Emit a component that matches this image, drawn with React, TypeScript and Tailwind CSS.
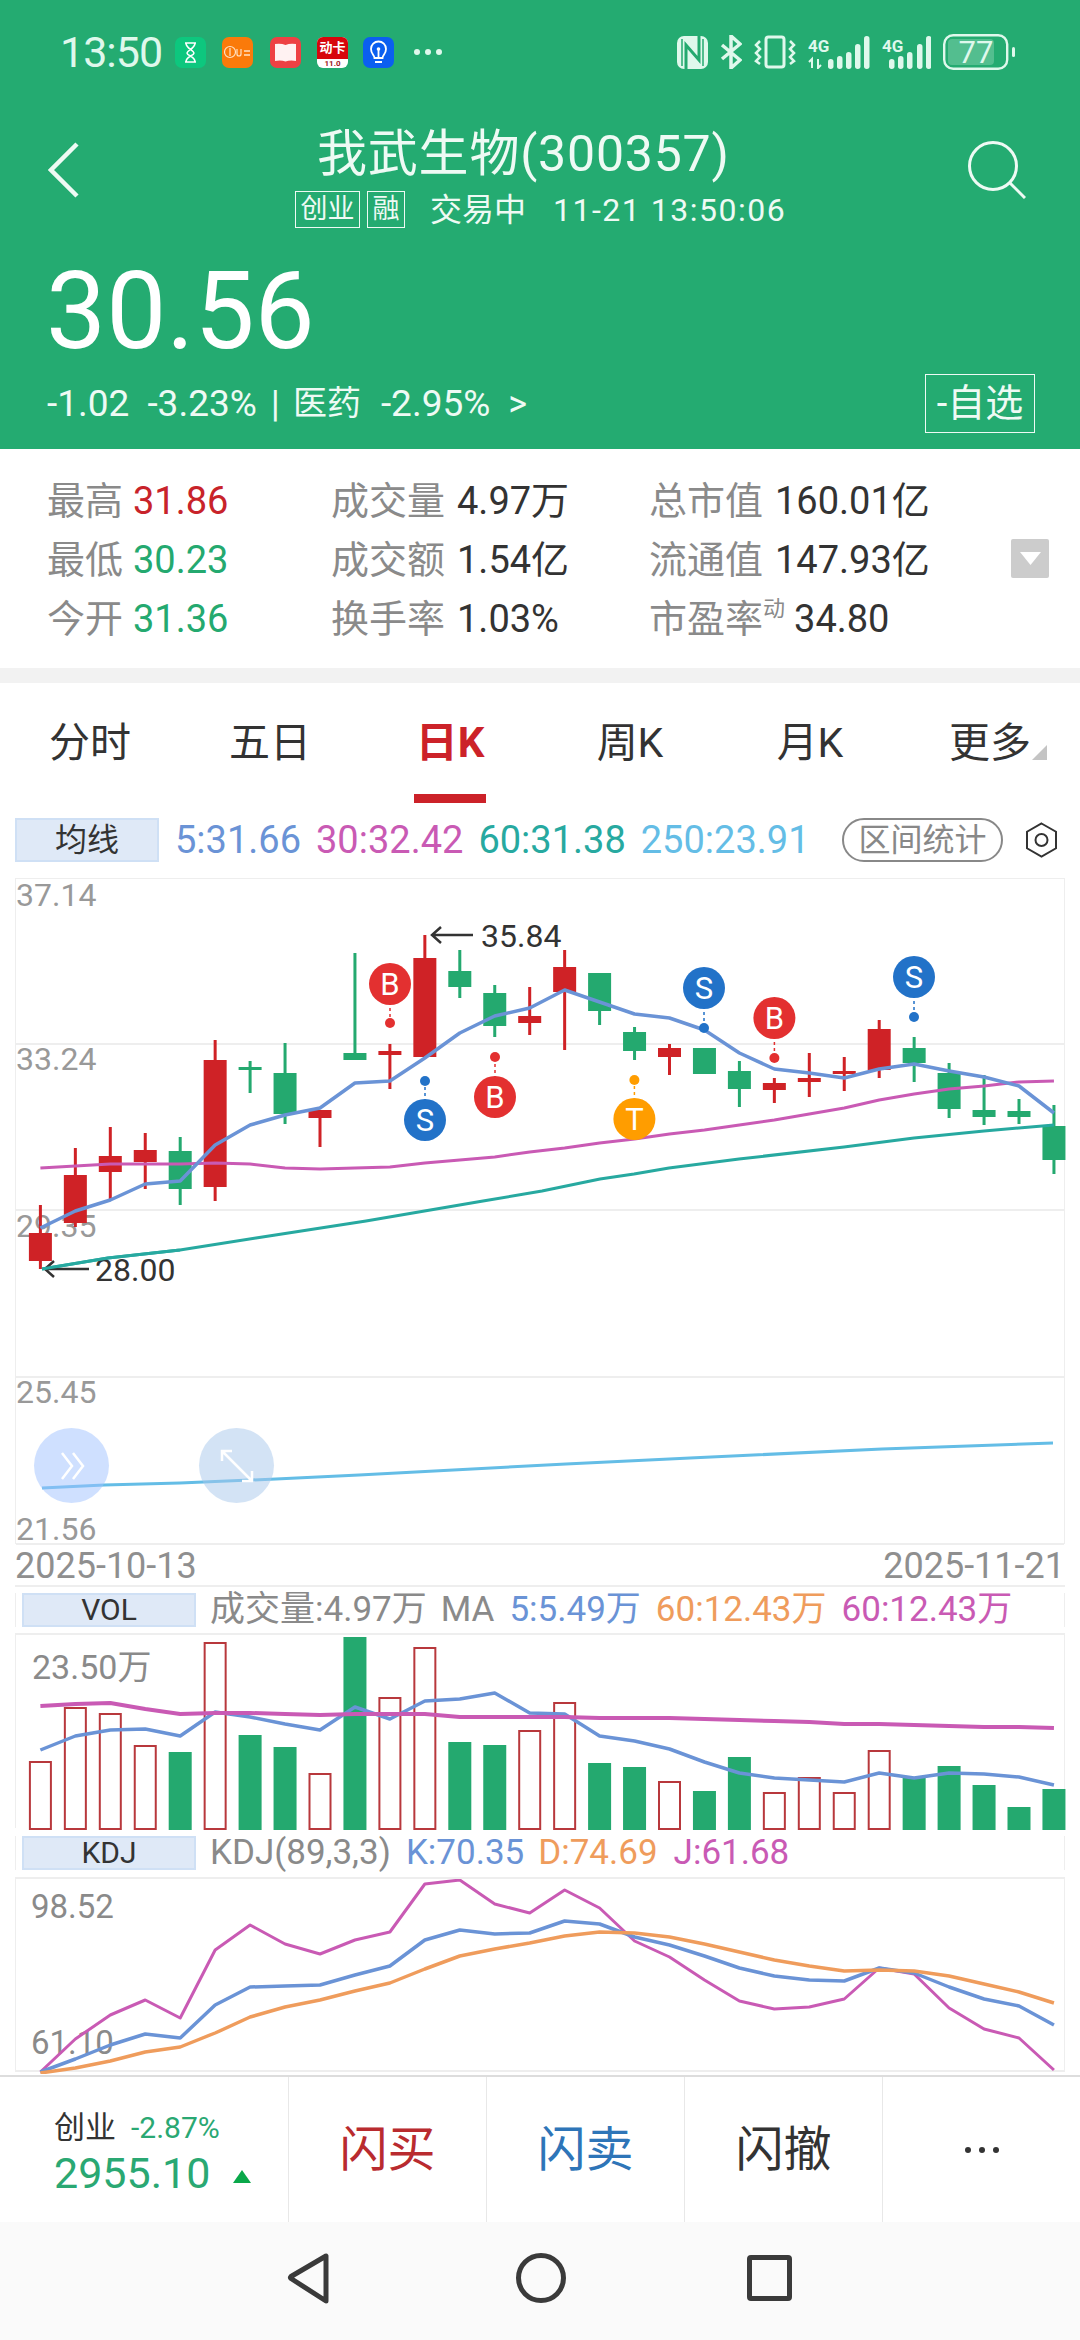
import React from 'react';

const RED = '#cf2226';
const GREEN = '#24a96f';
const STATUS = '#dff8ec';

// candle centres share one x scale across the three chart panels
const cx = (i: number) => 39.4 + 34.95 * i;

// [wickTop, wickBottom, bodyTop, bodyBottom, isRed]
const candles: [number, number, number, number, boolean][] = [
  [1204, 1268, 1232, 1260, true],
  [1147, 1226, 1174, 1222, true],
  [1126, 1200, 1155, 1171, true],
  [1132, 1188, 1149, 1161, true],
  [1136, 1204, 1150, 1188, false],
  [1039, 1200, 1059, 1186, true],
  [1060, 1092, 1066, 1069, false],
  [1042, 1123, 1072, 1113, false],
  [1109, 1146, 1109, 1117, true],
  [952, 1059, 1052, 1059, false],
  [1043, 1088, 1050, 1054, true],
  [934, 1056, 957, 1056, true],
  [949, 997, 970, 986, false],
  [984, 1036, 992, 1025, false],
  [986, 1034, 1015, 1022, true],
  [949, 1049, 966, 991, true],
  [972, 1024, 972, 1010, false],
  [1026, 1059, 1031, 1050, false],
  [1043, 1074, 1047, 1056, true],
  [1047, 1073, 1047, 1073, false],
  [1060, 1106, 1070, 1088, false],
  [1077, 1102, 1082, 1089, true],
  [1052, 1096, 1077, 1081, true],
  [1056, 1090, 1070, 1073, true],
  [1019, 1077, 1028, 1069, true],
  [1036, 1081, 1047, 1062, false],
  [1062, 1117, 1072, 1108, false],
  [1074, 1124, 1109, 1116, false],
  [1098, 1123, 1110, 1116, false],
  [1104, 1173, 1125, 1159, false],
];

const ma5 = [1227, 1210, 1199, 1183, 1180, 1144, 1124, 1114, 1107, 1082, 1080, 1057, 1032, 1015, 1007, 989, 1001, 1013, 1017, 1029, 1052, 1068, 1072, 1077, 1068, 1063, 1070, 1076, 1085, 1112];
const ma30 = [1167, 1165, 1163, 1163, 1163, 1162, 1163, 1167, 1168, 1167, 1166, 1162, 1159, 1156, 1151, 1147, 1142, 1138, 1133, 1129, 1124, 1119, 1113, 1107, 1099, 1093, 1088, 1085, 1081, 1080];
const ma60 = '41,1268 107,1257 179,1249 255,1237 365,1220 482,1200 541,1190 599,1178 633,1173 668,1167 738,1158 843,1146 913,1137 983,1130 1053,1124';
const ma250 = '41,1487 103,1484 179,1482 275,1478 358,1474 565,1463 689,1457 881,1448 1052,1442';

const volTops = [1759, 1705, 1711, 1743, 1750, 1640, 1733, 1745, 1771, 1635, 1695, 1645, 1740, 1743, 1728, 1700, 1761, 1765, 1779, 1789, 1755, 1790, 1775, 1790, 1748, 1776, 1764, 1783, 1805, 1787];
const volMa5 = [1748, 1734, 1728, 1727, 1734, 1710, 1715, 1722, 1728, 1705, 1717, 1699, 1697, 1691, 1711, 1712, 1734, 1739, 1747, 1760, 1771, 1776, 1778, 1780, 1771, 1776, 1771, 1772, 1775, 1783];
const volMa60 = [1704, 1702, 1701, 1707, 1712, 1711, 1711, 1712, 1713, 1712, 1712, 1712, 1715, 1715, 1715, 1715, 1716, 1716, 1716, 1717, 1718, 1719, 1720, 1722, 1722, 1723, 1724, 1725, 1725, 1726];

const kdjJ = [2070, 2037, 2013, 1998, 2016, 1948, 1923, 1942, 1952, 1938, 1930, 1882, 1878, 1902, 1911, 1888, 1906, 1939, 1955, 1978, 1999, 2007, 2005, 1997, 1966, 1972, 2006, 2027, 2036, 2068];
const kdjK = [2070, 2057, 2043, 2032, 2036, 2003, 1985, 1984, 1983, 1973, 1964, 1938, 1928, 1932, 1931, 1919, 1922, 1935, 1943, 1954, 1966, 1974, 1978, 1979, 1966, 1971, 1985, 1997, 2004, 2023];
const kdjD = [2071, 2066, 2059, 2050, 2045, 2031, 2015, 2005, 1998, 1989, 1981, 1967, 1954, 1947, 1941, 1934, 1930, 1931, 1935, 1942, 1950, 1958, 1964, 1969, 1968, 1969, 1974, 1982, 1990, 2001];

// letter, x, circle y, dot y, colour
const signals: [string, number, number, number, string][] = [
  ['B', 389, 983, 1022, '#e33030'],
  ['S', 424, 1119, 1080, '#2272c8'],
  ['B', 494, 1096, 1056, '#e33030'],
  ['T', 633.4, 1118, 1079, '#ff9d00'],
  ['S', 703, 987, 1027, '#2272c8'],
  ['B', 773.4, 1017, 1057, '#e33030'],
  ['S', 913, 976, 1016, '#2272c8'],
];

const toPoints = (ys: number[]) => ys.map((y, i) => `${cx(i)},${y}`).join(' ');

function Line({ points, color, width = 3.5 }: { points: string; color: string; width?: number }) {
  return <polyline points={points} fill="none" stroke={color} strokeWidth={width} strokeLinejoin="round" />;
}

function StatusBar() {
  return (
    <div className="flex h-[36px] items-center text-[#dff8ec]">
      <span className="ml-[60px] w-[102px] text-[43px] leading-[36px] tracking-[-1px]">13:50</span>
      <svg className="ml-[13px]" width="31" height="31" viewBox="0 0 31 31">
        <rect width="31" height="31" rx="7" fill="#0dc77e" />
        <path d="M10 6h11M10 25h11M11 6c0 6 8 7 8 10s-8 3-8 9M20 6c0 6-8 7-8 10s8 3 8 9" stroke="#fff" strokeWidth="1.6" fill="none" />
      </svg>
      <svg className="ml-[16px]" width="31" height="31" viewBox="0 0 31 31">
        <rect width="31" height="31" rx="7" fill="#fa7a0a" />
        <circle cx="8" cy="15" r="5.5" fill="none" stroke="#ffe2c4" strokeWidth="1.2" />
        <path d="M8 11v8M15 12v5a2 2 0 0 0 4 0v-5" stroke="#ffe2c4" strokeWidth="1.2" fill="none" />
        <path d="M22 14h6M22 18h6" stroke="#ffe2c4" strokeWidth="1.5" />
      </svg>
      <svg className="ml-[17px]" width="31" height="31" viewBox="0 0 31 31">
        <rect width="31" height="31" rx="7" fill="#ee4144" />
        <path d="M5 7q6-1 10.500 1q4.500-2 10.500-1v17q-6-1-10.500 0.500q-4.500-1.500-10.500-0.500z" fill="#fff2f2" />
      </svg>
      <div className="ml-[16px] flex h-[31px] w-[31px] flex-col overflow-hidden rounded-[6px] bg-white">
        <span className="h-[22px] bg-[#d7060c] text-center text-[13px] leading-[22px] font-bold text-white">动卡</span>
        <span className="text-center text-[8px] leading-[9px] font-bold text-[#a02020]">11.0</span>
      </div>
      <svg className="ml-[15px]" width="31" height="31" viewBox="0 0 31 31">
        <rect width="31" height="31" rx="7" fill="#0b5ff0" />
        <path d="M11.500 21c0-3-3.500-4-3.500-9a7.500 7.500 0 0 1 15 0c0 5-3.500 6-3.500 9zM12 25h7M15.500 21v-9" stroke="#fff" strokeWidth="1.800" fill="none" />
        <circle cx="15.500" cy="12" r="1.800" fill="#fff" />
      </svg>
      <div className="ml-[20px] flex gap-[5px]">
        <span className="h-[6px] w-[6px] rounded-full bg-[#dff8ec]" />
        <span className="h-[6px] w-[6px] rounded-full bg-[#dff8ec]" />
        <span className="h-[6px] w-[6px] rounded-full bg-[#dff8ec]" />
      </div>
      <div className="mr-[65px] ml-auto flex items-center gap-[12px]">
        <svg width="31" height="33" viewBox="0 0 31 33">
          <rect x="0" y="0" width="31" height="33" rx="7" fill={STATUS} />
          <path d="M9 33V9l13 15V0" stroke={GREEN} strokeWidth="3" fill="none" />
          <path d="M5 3v27M26 3v27" stroke={GREEN} strokeWidth="1.500" fill="none" />
        </svg>
        <svg width="22" height="34" viewBox="0 0 22 34">
          <path d="M2 10l18 15-9 8V1l9 8L2 24" stroke={STATUS} strokeWidth="3.500" fill="none" />
        </svg>
        <svg width="42" height="34" viewBox="0 0 42 34">
          <rect x="12" y="2" width="18" height="30" rx="2.500" stroke={STATUS} strokeWidth="3" fill="none" />
          <path d="M6 6L2 10l4 4-4 4 4 4-4 4 4 3M36 6l4 4-4 4 4 4-4 4 4 4-4 3" stroke={STATUS} strokeWidth="2.500" fill="none" />
        </svg>
        <svg width="62" height="34" viewBox="0 0 62 34" fontFamily="Roboto, sans-serif">
          <text x="0" y="17" fontSize="17" fontWeight="700" fill={STATUS}>4G</text>
          <path d="M4 33v-9l-3 3M10 24v9l3-3" stroke={STATUS} strokeWidth="2" fill="none" />
          <rect x="20" y="24" width="5.500" height="10" rx="2.700" fill={STATUS} />
          <rect x="29" y="21" width="5.500" height="13" rx="2.700" fill={STATUS} />
          <rect x="38" y="17" width="5.500" height="17" rx="2.700" fill={STATUS} />
          <rect x="47" y="9" width="5.500" height="25" rx="2.700" fill={STATUS} />
          <rect x="56" y="1" width="5.500" height="33" rx="2.700" fill={STATUS} />
        </svg>
        <svg width="49" height="34" viewBox="0 0 49 34" fontFamily="Roboto, sans-serif">
          <text x="0" y="17" fontSize="17" fontWeight="700" fill={STATUS}>4G</text>
          <rect x="7" y="24" width="5.500" height="10" rx="2.700" fill={STATUS} />
          <rect x="16" y="21" width="5.500" height="13" rx="2.700" fill={STATUS} />
          <rect x="25" y="17" width="5.500" height="17" rx="2.700" fill={STATUS} />
          <rect x="35" y="9" width="5.500" height="25" rx="2.700" fill={STATUS} />
          <rect x="44" y="1" width="5.500" height="33" rx="2.700" fill={STATUS} />
        </svg>
        <svg width="72" height="36" viewBox="0 0 72 36" fontFamily="Roboto, sans-serif">
          <rect x="5" y="5" width="46" height="26" rx="4" fill={STATUS} opacity="0.25" />
          <rect x="1.200" y="1.200" width="63" height="33.500" rx="9" fill="none" stroke={STATUS} strokeWidth="2.400" />
          <text x="33" y="29" fontSize="31" textAnchor="middle" fill={STATUS}>77</text>
          <rect x="69" y="13" width="3" height="10" rx="1.500" fill={STATUS} />
        </svg>
      </div>
    </div>
  );
}

function Header() {
  return (
    <div className="h-[449px] bg-[#24ab71] pt-[34px] text-[#eefaf4]">
      <StatusBar />
      <div className="mt-[60px] flex items-center">
        <svg className="mt-[-18px] ml-[48px]" width="31" height="56" viewBox="0 0 31 56">
          <path d="M29 2L3 28l26 26" stroke="#eefaf4" strokeWidth="4.500" fill="none" />
        </svg>
        <div className="ml-[216px]">
          <div className="ml-[22px] h-[48px] text-[50px] leading-[48px] tracking-[0.8px]">我武生物(300357)</div>
          <div className="mt-[13px] flex h-[37px] items-center">
            <span className="h-[37px] w-[65px] border border-[#eefaf4] text-center text-[27px] leading-[35px]">创业</span>
            <span className="ml-[7px] h-[37px] w-[38px] border border-[#eefaf4] text-center text-[27px] leading-[35px]">融</span>
            <span className="ml-[25px] text-[32px]">交易中</span>
            <span className="ml-[27px] text-[32px] tracking-[1.5px]">11-21 13:50:06</span>
          </div>
        </div>
        <svg className="mt-[-18px] mr-[54px] ml-auto" width="58" height="58" viewBox="0 0 58 58">
          <circle cx="25" cy="25" r="23.500" stroke="#eefaf4" strokeWidth="3" fill="none" />
          <path d="M41 41l16 16" stroke="#eefaf4" strokeWidth="3" fill="none" />
        </svg>
      </div>
      <div className="mt-[30px] pl-[46px] text-[107px] leading-[108px] text-white">30.56</div>
      <div className="mt-[8px] flex h-[59px] items-center pl-[47px] text-[37px]">
        <span>-1.02</span>
        <span className="ml-[18px]">-3.23%</span>
        <span className="ml-[14px]">|</span>
        <span className="ml-[13px] text-[34px]">医药</span>
        <span className="ml-[20px]">-2.95%</span>
        <span className="ml-[18px] text-[36px]">&gt;</span>
        <span className="mr-[45px] ml-auto h-[59px] w-[110px] border border-[#eefaf4] text-center text-[38px] leading-[57px]">-自选</span>
      </div>
    </div>
  );
}

function Stat({ label, value, color, sup }: { label: string; value: string; color: string; sup?: string }) {
  return (
    <div className="flex h-[59px] items-center text-[38px]">
      <span className="text-[#8a8a8a]">{label}</span>
      {sup && <span className="mt-[-22px] text-[22px] text-[#8a8a8a]">{sup}</span>}
      <span className={sup ? 'ml-[9px]' : label.length === 2 ? 'ml-[10px]' : 'ml-[12px]'} style={{ color }}>{value}</span>
    </div>
  );
}

function Stats() {
  return (
    <div className="flex h-[219px] items-center">
      <div className="mt-[3px] grid flex-1 grid-cols-[284px_318px_1fr] pl-[47px]">
        <Stat label="最高" value="31.86" color="#c8232a" />
        <Stat label="成交量" value="4.97万" color="#333" />
        <Stat label="总市值" value="160.01亿" color="#333" />
        <Stat label="最低" value="30.23" color={GREEN} />
        <Stat label="成交额" value="1.54亿" color="#333" />
        <Stat label="流通值" value="147.93亿" color="#333" />
        <Stat label="今开" value="31.36" color={GREEN} />
        <Stat label="换手率" value="1.03%" color="#333" />
        <Stat label="市盈率" value="34.80" color="#333" sup="动" />
      </div>
      <div className="mr-[31px] flex h-[39px] w-[38px] items-center justify-center rounded-[2px] bg-[#cccccc]">
        <svg width="21" height="13" viewBox="0 0 21 13"><path d="M0 0h21L10.500 13z" fill="#fff" /></svg>
      </div>
    </div>
  );
}

function Tabs() {
  const tabs = ['分时', '五日', '日K', '周K', '月K', '更多'];
  return (
    <div className="grid h-[120px] grid-cols-6">
      {tabs.map(tab => (
        <div key={tab} className="flex flex-col items-center pt-[39px]">
          <div className={tab === '日K' ? 'relative h-[42px] text-[42px] leading-[42px] font-bold text-[#cc2229]' : 'relative h-[42px] text-[41px] leading-[42px] text-[#333]'}>
            {tab}
            {tab === '更多' && (
              <svg className="absolute top-[23px] left-[83px]" width="15" height="15" viewBox="0 0 15 15"><path d="M15 0v15H0z" fill="#c4c4c4" /></svg>
            )}
          </div>
          {tab === '日K' && <div className="mt-[30px] h-[9px] w-[72px] bg-[#cc2229]" />}
        </div>
      ))}
    </div>
  );
}

function MaRow() {
  return (
    <div className="mt-[15px] flex h-[44px] items-center text-[38px]">
      <div className="ml-[15px] h-[44px] w-[144px] border-2 border-[#cfe0f5] bg-[#dfe9f7] text-center text-[32px] leading-[40px] text-[#333]">均线</div>
      <div className="ml-[16px] flex gap-[15px]">
        <span className="text-[#6a93d6]">5:31.66</span>
        <span className="text-[#c95ab4]">30:32.42</span>
        <span className="text-[#27a9a0]">60:31.38</span>
        <span className="text-[#64bde6]">250:23.91</span>
      </div>
      <div className="ml-auto h-[44px] w-[161px] rounded-full border-2 border-[#888] text-center text-[32px] leading-[40px] text-[#888]">区间统计</div>
      <svg className="mr-[22px] ml-[22px]" width="33" height="36" viewBox="0 0 33 36">
        <path d="M16.500 1.500l14.500 8.250v16.500L16.500 34.500 2 26.250V9.750z" fill="none" stroke="#333" strokeWidth="2" />
        <circle cx="16.500" cy="18" r="6" fill="none" stroke="#333" strokeWidth="2" />
      </svg>
    </div>
  );
}

function PriceChart() {
  return (
    <div className="relative mx-[15px] h-[666px] border-x border-t border-[#eeeeee] text-[32px] text-[#999999]">
      <div className="h-[166px] border-b-2 border-[#eeeeee] leading-[32px]">37.14</div>
      <div className="h-[166px] border-b-2 border-[#eeeeee] leading-[28px]">33.24</div>
      <div className="h-[167px] border-b-2 border-[#eeeeee] leading-[30px]">29.35</div>
      <div className="flex h-[167px] flex-col justify-between border-b-2 border-[#eeeeee] leading-[28px]">
        <span>25.45</span>
        <span>21.56</span>
      </div>

      <svg className="absolute top-0 left-0" width="1050" height="666" viewBox="15 878 1050 666" fontFamily="Roboto, sans-serif">
        {candles.map(([wt, wb, bt, bb, isRed], i) => (
          <g key={i} fill={isRed ? RED : GREEN}>
            <rect x={cx(i) - 1.500} y={wt} width="3" height={wb - wt} />
            <rect x={cx(i) - 11.500} y={bt} width="23" height={Math.max(bb - bt, 3)} />
          </g>
        ))}
        <Line points={toPoints(ma30)} color="#c95ab4" width={3} />
        <Line points={ma60} color="#27a9a0" width={3} />
        <Line points={ma250} color="#64bde6" width={3} />
        <Line points={toPoints(ma5)} color="#6a93d6" />

        {signals.map(([letter, x, y, dot, color]) => (
          <g key={`${letter}${x}`} fill={color}>
            <line x1={x} x2={x} y1={y} y2={dot} stroke={color} strokeWidth="1.500" strokeDasharray="3 3" />
            <circle cx={x} cy={dot} r="5" />
            <circle cx={x} cy={y} r="21" />
            <text x={x} y={y + 11} fontSize="31" textAnchor="middle" fill="#fff">{letter}</text>
          </g>
        ))}

        <path d="M472 934h-41m9-8l-9 8 9 8" stroke="#333" strokeWidth="2.500" fill="none" />
        <text x="480" y="946" fontSize="32" fill="#333">35.84</text>
        <path d="M88 1268H44m9-8l-9 8 9 8" stroke="#333" strokeWidth="2.500" fill="none" />
        <text x="94" y="1280" fontSize="32" fill="#333">28.00</text>
        <Line points="41,1268 107,1257 179,1249" color="#27a9a0" width={3} />
      </svg>

      <div className="absolute top-[549px] left-[18px] flex h-[75px] w-[75px] items-center justify-center rounded-full bg-[#a0c1ff]/50">
        <svg width="32" height="32" viewBox="0 0 32 32"><path d="M6 3l10 13L6 29M17 3l10 13-10 13" stroke="#fff" strokeWidth="2.500" fill="none" /></svg>
      </div>
      <div className="absolute top-[549px] left-[183px] flex h-[75px] w-[75px] items-center justify-center rounded-full bg-[#a7c7eb]/50">
        <svg width="42" height="42" viewBox="0 0 42 42"><path d="M6 6l30 30M6 16V6h10M36 26v10H26" stroke="#fff" strokeWidth="2.500" fill="none" /></svg>
      </div>
    </div>
  );
}

function PanelHeader({ tag, children }: { tag: string; children: React.ReactNode }) {
  return (
    <div className="flex h-[34px] items-center border-x border-[#eeeeee] pl-[6px] text-[35px] leading-[34px]">
      <div className="w-[174px] border-2 border-[#cfe0f5] bg-[#dfe9f7] text-center text-[30px] leading-[30px] text-[#333]">{tag}</div>
      <div className="ml-[14px] flex">{children}</div>
    </div>
  );
}

function VolumeChart() {
  return (
    <>
      <div className="mx-[15px] h-[48px] border-t-2 border-[#eeeeee] pt-[6px]">
        <PanelHeader tag="VOL">
          <span className="text-[#8a8a8a]">成交量:4.97万</span>
          <span className="ml-[14px] text-[#8a8a8a]">MA</span>
          <span className="ml-[15px] text-[#6a93d6]">5:5.49万</span>
          <span className="ml-[15px] text-[#ef9c5c]">60:12.43万</span>
          <span className="ml-[15px] text-[#c95ab4]">60:12.43万</span>
        </PanelHeader>
      </div>
      <div className="relative mx-[15px] h-[195px] border-x border-t-2 border-[#eeeeee] pt-[12px] pl-[16px] text-[34px] leading-[40px] text-[#8a8a8a]">
        23.50万
        <svg className="absolute top-0 left-0" width="1050" height="195" viewBox="15 1633 1050 195">
          {volTops.map((top, i) =>
            candles[i][4] ? (
              <rect key={i} x={cx(i) - 10.500} y={top + 1} width="21" height={1826 - top} fill="#fff" stroke="#b8383c" strokeWidth="2" />
            ) : (
              <rect key={i} x={cx(i) - 11.500} y={top} width="23" height={1828 - top} fill={GREEN} />
            ),
          )}
          <Line points={toPoints(volMa5)} color="#6a93d6" />
          <Line points={toPoints(volMa60)} color="#c95ab4" width={4} />
        </svg>
      </div>
    </>
  );
}

function KdjChart() {
  return (
    <>
      <div className="flex h-[49px] flex-col justify-center bg-white">
        <div className="mx-[15px]">
          <PanelHeader tag="KDJ">
            <span className="text-[#8a8a8a]">KDJ(89,3,3)</span>
            <span className="ml-[15px] text-[#6a93d6]">K:70.35</span>
            <span className="ml-[14px] text-[#ef9c5c]">D:74.69</span>
            <span className="ml-[16px] text-[#c95ab4]">J:61.68</span>
          </PanelHeader>
        </div>
      </div>
      <div className="relative mx-[15px] flex h-[195px] flex-col justify-between border-x border-y-2 border-[#eeeeee] pt-[8px] pb-[7px] pl-[15px] text-[33px] leading-[40px] text-[#8a8a8a]">
        <span>98.52</span>
        <span>61.10</span>
        <svg className="absolute top-0 left-0" width="1050" height="195" viewBox="15 1877 1050 195">
          <Line points={toPoints(kdjJ)} color="#c95ab4" width={3} />
          <Line points={toPoints(kdjK)} color="#6a93d6" />
          <Line points={toPoints(kdjD)} color="#ef9c5c" />
        </svg>
      </div>
    </>
  );
}

function BottomBar() {
  return (
    <div className="mt-[3px] grid h-[147px] grid-cols-[288px_198px_198px_198px_198px] border-t-2 border-[#dddddd]">
      <div className="pt-[34px] pl-[54px]">
        <div className="flex h-[34px] items-center text-[31px] leading-[34px] text-[#333]">
          创业
          <span className="ml-[15px] text-[30px] text-[#2aa873]">-2.87%</span>
        </div>
        <div className="mt-[3px] flex items-center text-[43px] leading-[50px] text-[#2aa873]">
          2955.10
          <svg className="mt-[6px] ml-[23px]" width="18" height="13" viewBox="0 0 18 13"><path d="M9 0l9 13H0z" fill="#0aa84a" /></svg>
        </div>
      </div>
      <div className="flex items-center justify-center border-l border-[#e8e8e8] text-[48px] text-[#b92b2f]">闪买</div>
      <div className="flex items-center justify-center border-l border-[#e8e8e8] text-[48px] text-[#2e75b8]">闪卖</div>
      <div className="flex items-center justify-center border-l border-[#e8e8e8] text-[48px] text-[#333]">闪撤</div>
      <div className="flex items-center justify-center gap-[8px] border-l border-[#e8e8e8]">
        <span className="h-[6px] w-[6px] rounded-full bg-[#333]" />
        <span className="h-[6px] w-[6px] rounded-full bg-[#333]" />
        <span className="h-[6px] w-[6px] rounded-full bg-[#333]" />
      </div>
    </div>
  );
}

function NavBar() {
  return (
    <div className="flex h-[118px] items-center bg-[#fafafa] pb-[6px]">
      <svg className="ml-[286px]" width="45" height="53" viewBox="0 0 45 53">
        <path d="M40 4v45L5 26.500 q-1-1 0-2z" fill="none" stroke="#3a3a3a" strokeWidth="5" strokeLinejoin="round" />
      </svg>
      <div className="ml-[185px] h-[50px] w-[50px] rounded-full border-[5px] border-[#3a3a3a]" />
      <div className="ml-[181px] h-[46px] w-[45px] rounded-[4px] border-[5px] border-[#3a3a3a]" />
    </div>
  );
}

export default function App() {
  return (
    <div className="h-[2340px] w-[1080px] overflow-hidden bg-white font-[Roboto,'Noto_Sans_CJK_SC',sans-serif]">
      <Header />
      <Stats />
      <div className="h-[15px] bg-[#f2f2f2]" />
      <Tabs />
      <MaRow />
      <div className="h-[16px]" />
      <PriceChart />
      <div className="flex h-[41px] items-center justify-between px-[15px] pt-[3px] text-[36px] leading-[38px] text-[#8f8f8f]">
        <span>2025-10-13</span>
        <span>2025-11-21</span>
      </div>
      <VolumeChart />
      <KdjChart />
      <BottomBar />
      <NavBar />
    </div>
  );
}
